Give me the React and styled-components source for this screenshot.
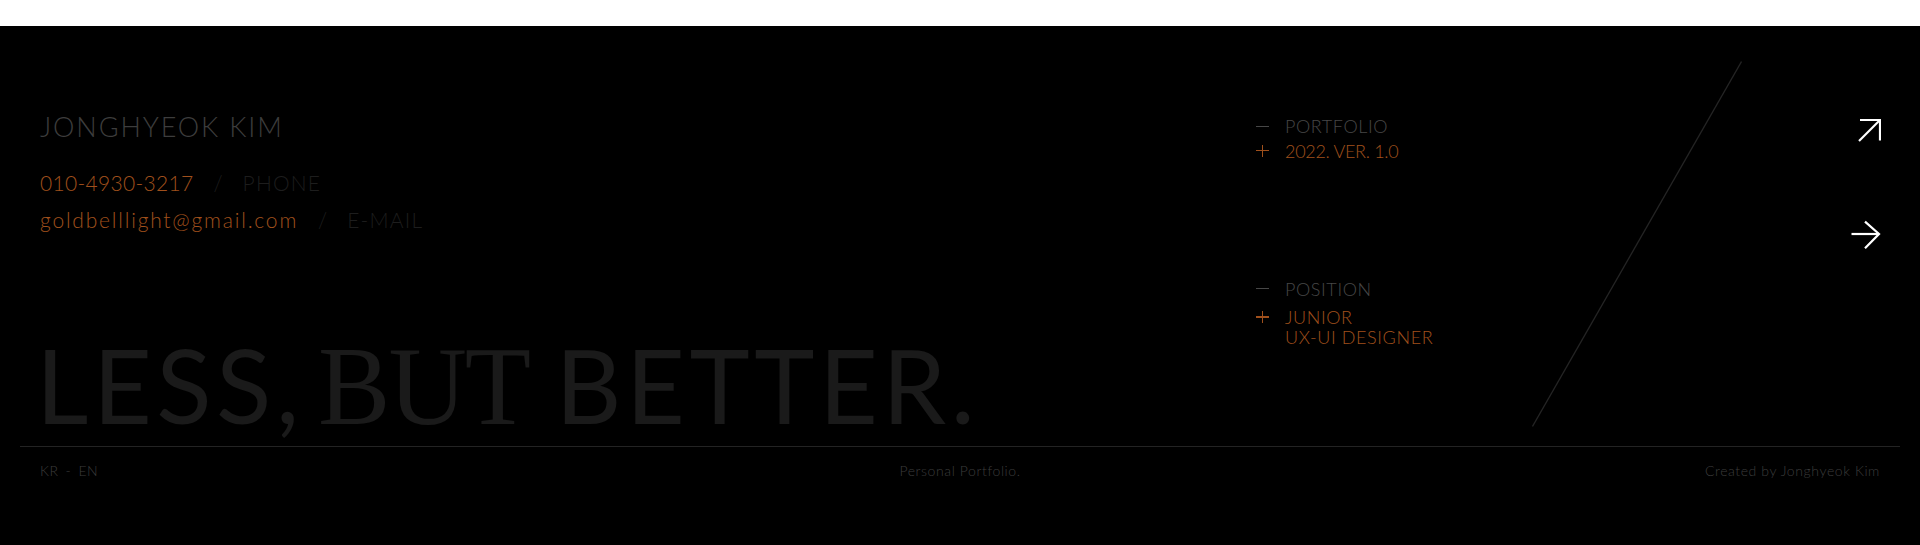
import React from "react";
import styled, { createGlobalStyle } from "styled-components";

const Global = createGlobalStyle`
  html, body { margin: 0; padding: 0; background: #fff; }
  body { font-family: "Lato", "Inter", sans-serif; }
  * { box-sizing: border-box; }
`;

const Page = styled.div`
  padding-top: 26px;
  background: #fff;
`;

const Footer = styled.footer`
  background: #000;
  height: 519px;
  padding: 0 20px;
  display: flex;
  flex-direction: column;
`;

const Top = styled.div`
  height: 421px;
  display: flex;
  border-bottom: 1px solid #232323;
`;

const Left = styled.div`
  flex: 1;
  min-width: 0;
  padding-left: 20px;
  display: flex;
  flex-direction: column;
`;

const Name = styled.h2`
  margin: 87px 0 0;
  font: 300 27px/1 "Lato", sans-serif;
  color: #3d3d3d;
  letter-spacing: 1.9px;
`;

const ContactList = styled.ul`
  list-style: none;
  margin: 32px 0 0;
  padding: 0;
  display: flex;
  flex-direction: column;
  gap: 16px;
`;

const ContactRow = styled.li`
  display: flex;
  align-items: baseline;
  font: 300 21px/1 "Lato", sans-serif;
`;

const Value = styled.a`
  color: #a0501c;
  text-decoration: none;
  letter-spacing: ${(p) => p.$track || 0}px;
`;

const Sep = styled.span`
  color: #1d1d1d;
  margin: 0 20px;
`;

const Label = styled.span`
  color: #1d1d1d;
  letter-spacing: 1.2px;
`;

const Slogan = styled.p`
  margin: auto 0 4px -4px;
  display: flex;
  align-items: baseline;
  white-space: nowrap;
  color: #1a1a1a;
  font: 400 102px/1 "Lato", sans-serif;
  letter-spacing: 4.5px;
`;

const SansWord = styled.span`
  margin-right: ${(p) => p.$gap || 0}px;
`;

const SerifWord = styled.span`
  display: inline-block;
  font: 400 113px/1 "Liberation Serif", serif;
  letter-spacing: -2px;
  transform: scaleX(0.96);
  transform-origin: left bottom;
  margin-right: 18px;
`;

const Info = styled.div`
  width: 276px;
  padding-top: 90px;
  display: flex;
  flex-direction: column;
`;

const Group = styled.dl`
  margin: 0 0 ${(p) => p.$after || 0}px;
  display: flex;
  flex-direction: column;
  gap: ${(p) => p.$gap}px;
`;

const Row = styled.div`
  display: flex;
  align-items: flex-start;
  font: 300 18px/20px "Lato", sans-serif;
  letter-spacing: 0.6px;
  color: ${(p) => (p.$accent ? "#a0501c" : "#474747")};
`;

const Term = styled.dt`
  margin: 0;
`;

const Desc = styled.dd`
  margin: 0;
  letter-spacing: ${(p) => (p.$tight ? "-0.3px" : "inherit")};
`;

const Marker = styled.span`
  position: relative;
  flex: none;
  width: 13px;
  height: 20px;
  margin-right: 16px;
  &::before {
    content: "";
    position: absolute;
    left: 0;
    top: 9.5px;
    width: 13px;
    height: 1.3px;
    background: ${(p) => (p.$plus ? "#a0501c" : "#474747")};
  }
  &::after {
    content: "";
    display: ${(p) => (p.$plus ? "block" : "none")};
    position: absolute;
    left: 5.8px;
    top: 4px;
    width: 1.3px;
    height: 12px;
    background: #a0501c;
  }
`;

const Slash = styled.svg`
  flex: none;
  margin-top: 35px;
`;

const Arrows = styled.div`
  width: 158px;
  flex: none;
  padding: 92px 19px 0 0;
  display: flex;
  flex-direction: column;
  align-items: flex-end;
  gap: 78px;
`;

const ArrowLink = styled.a`
  display: block;
  line-height: 0;
`;

const Bottom = styled.div`
  display: grid;
  grid-template-columns: 1fr auto 1fr;
  padding: 17px 20px 0;
  font: 300 14px/1 "Lato", sans-serif;
  letter-spacing: 0.6px;
  color: #3c3c3c;
`;

const Lang = styled.div`
  display: flex;
  gap: 7px;
`;

const Center = styled.div`
  text-align: center;
`;

const Credit = styled.div`
  text-align: right;
`;

export default function App() {
  return (
    <Page>
      <Global />
      <Footer>
        <Top>
          <Left>
            <Name>JONGHYEOK KIM</Name>
            <ContactList>
              <ContactRow>
                <Value href="#" $track={0.3}>010-4930-3217</Value>
                <Sep>/</Sep>
                <Label>PHONE</Label>
              </ContactRow>
              <ContactRow>
                <Value href="#" $track={1.8}>goldbelllight@gmail.com</Value>
                <Sep>/</Sep>
                <Label>E-MAIL</Label>
              </ContactRow>
            </ContactList>
            <Slogan>
              <SansWord $gap={14}>LESS,</SansWord>
              <SerifWord>BUT</SerifWord>
              <SansWord>BETTER.</SansWord>
            </Slogan>
          </Left>
          <Info>
            <Group $gap={4.6} $after={118}>
              <Row>
                <Marker />
                <Term>PORTFOLIO</Term>
              </Row>
              <Row $accent>
                <Marker $plus />
                <Desc $tight>2022. VER. 1.0</Desc>
              </Row>
            </Group>
            <Group $gap={8.3}>
              <Row>
                <Marker />
                <Term>POSITION</Term>
              </Row>
              <Row $accent>
                <Marker $plus />
                <Desc>
                  JUNIOR
                  <br />
                  UX-UI DESIGNER
                </Desc>
              </Row>
            </Group>
          </Info>
          <Slash width="210" height="366" viewBox="0 0 210 366">
            <line x1="209.5" y1="0.5" x2="0.5" y2="365.5" stroke="#242424" strokeWidth="1.3" />
          </Slash>
          <Arrows>
            <ArrowLink href="#" aria-label="open">
              <svg width="24" height="24" viewBox="0 0 24 24" fill="none" stroke="#fff" strokeWidth="2.2">
                <path d="M2 23 L23 2" />
                <path d="M3 2 H23 V22.5" />
              </svg>
            </ArrowLink>
            <ArrowLink href="#" aria-label="next">
              <svg width="31" height="30" viewBox="0 0 31 30" fill="none" stroke="#fff" strokeWidth="2.2">
                <path d="M1.5 14 H29" />
                <path d="M15 1.7 L29 14 L15 28.3" />
              </svg>
            </ArrowLink>
          </Arrows>
        </Top>
        <Bottom>
          <Lang>
            <span>KR</span>
            <span>-</span>
            <span>EN</span>
          </Lang>
          <Center>Personal Portfolio.</Center>
          <Credit>Created by Jonghyeok Kim</Credit>
        </Bottom>
      </Footer>
    </Page>
  );
}
